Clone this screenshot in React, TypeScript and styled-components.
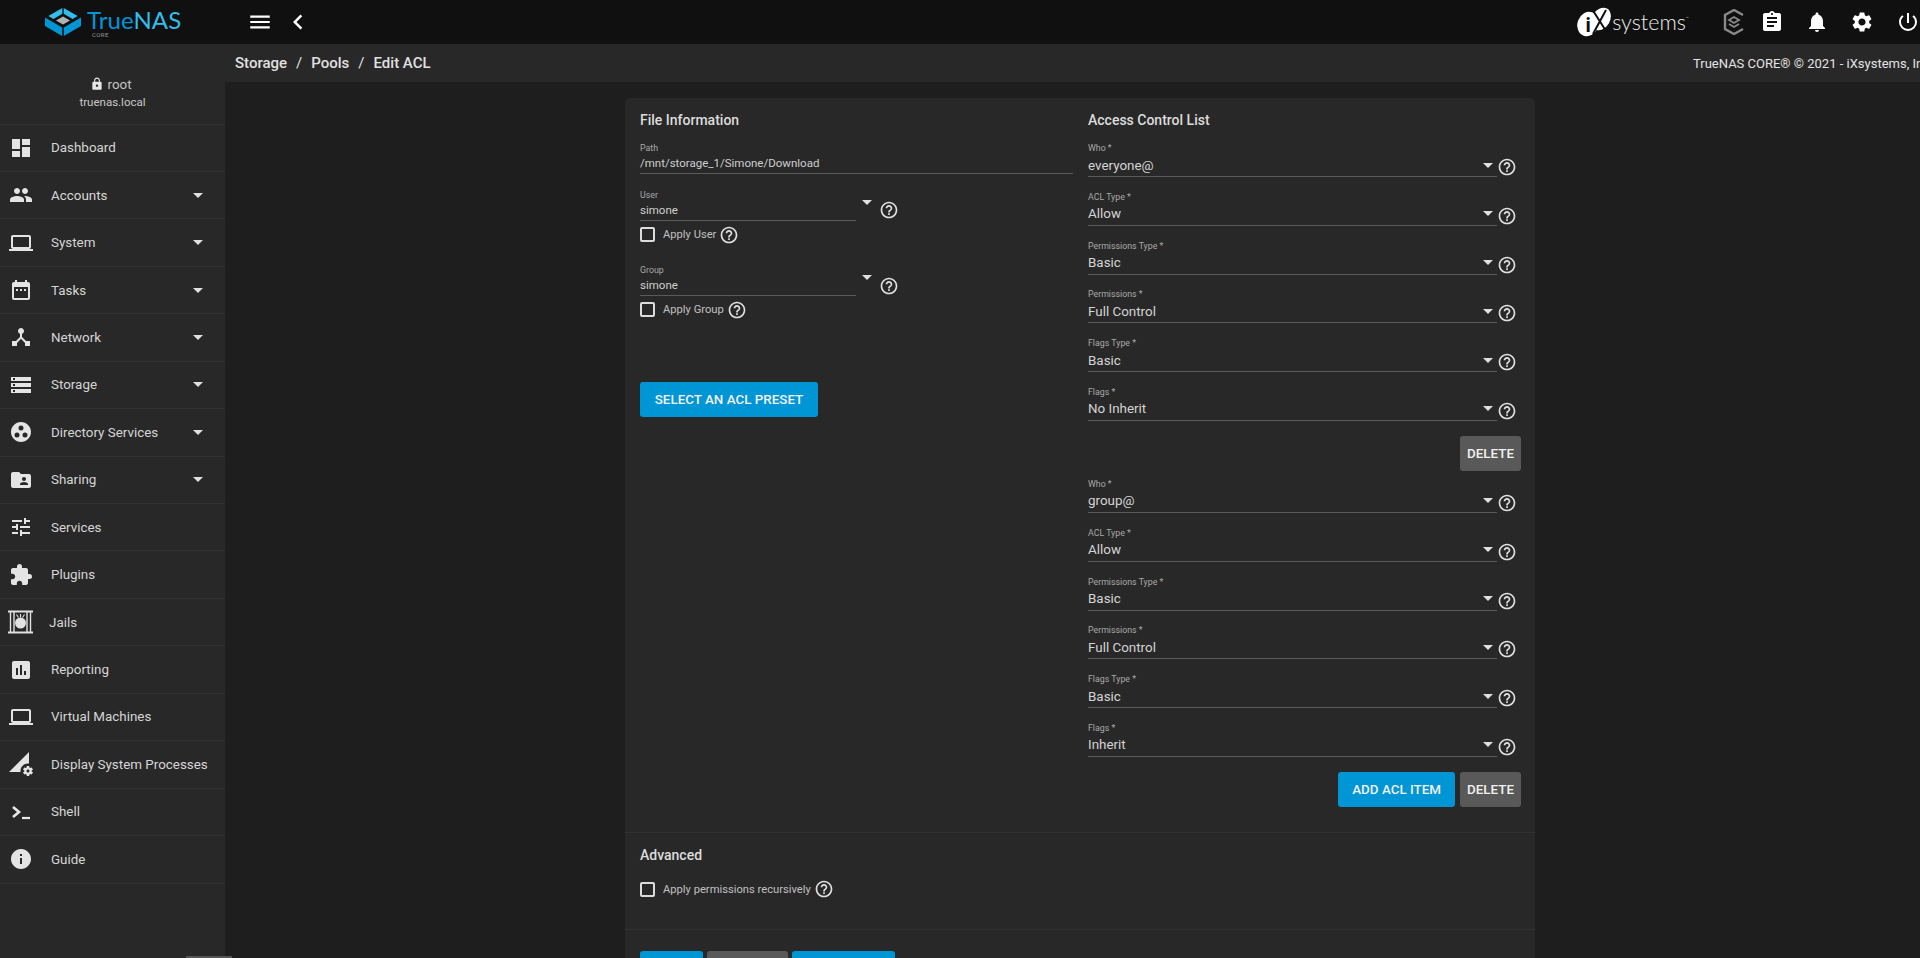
import React from 'react';
import styled, { createGlobalStyle } from 'styled-components';
import {
  MdAssessment,
  MdAssignment,
  MdChevronLeft,
  MdDashboard,
  MdDateRange,
  MdDeviceHub,
  MdExtension,
  MdFolderShared,
  MdGroup,
  MdGroupWork,
  MdHelpOutline,
  MdInfo,
  MdLaptop,
  MdLock,
  MdMenu,
  MdNotifications,
  MdPermDataSetting,
  MdPowerSettingsNew,
  MdSettings,
  MdStorage,
  MdTune,
} from 'react-icons/md';

const GlobalStyle = createGlobalStyle`
  html, body {
    margin: 0;
    height: 100%;
    overflow: hidden;
    background: #1e1e1e;
    font-family: Roboto, "Liberation Sans", sans-serif;
  }
  * {
    box-sizing: border-box;
  }
`;

const JailIcon = () => (
  <svg width="27" height="24" viewBox="0 0 27 24" fill="none" stroke="#e2e2e2">
    <path d="M1 1.5h25M1 22.5h25" strokeWidth="2" />
    <path d="M3.5 2v20M7 2v20M20 2v20M23.5 2v20" strokeWidth="1.4" />
    <circle cx="13.5" cy="13" r="5.5" fill="#e2e2e2" stroke="none" />
    <path d="M13.5 7.5V4M15.5 7.5l2-3M11.5 7.5l-2-3" strokeWidth="1.1" />
  </svg>
);

const ShellIcon = () => (
  <svg width="24" height="24" viewBox="0 0 24 24" fill="none" stroke="#e8e8e8">
    <path d="M4 7l6 5-6 5" strokeWidth="2.6" />
    <path d="M13 18h8" strokeWidth="2.2" />
  </svg>
);

const TrueNasMark = () => (
  <svg width="36" height="28" viewBox="0 0 36 28">
    <polygon points="17.3,0 17.3,5.8 8.4,11 3.4,8" fill="#31beec" />
    <polygon points="18.7,0 18.7,5.8 27.6,11 32.6,8" fill="#31beec" />
    <polygon points="18,8.6 25,12.6 18,16.6 11,12.6" fill="#aeb3b5" />
    <polygon points="0,9.6 17.2,19.6 17.2,28 0,18" fill="#0095d5" />
    <polygon points="36,9.6 18.8,19.6 18.8,28 36,18" fill="#0095d5" />
  </svg>
);

const IxMark = () => (
  <svg width="34" height="30" viewBox="0 0 34 30">
    <ellipse cx="11" cy="17" rx="10.5" ry="12.5" transform="rotate(20 11 17)" fill="#fff" />
    <ellipse cx="24" cy="12" rx="9" ry="12" transform="rotate(30 24 12)" fill="#fff" />
    <text x="8.5" y="25" fontSize="20" fontWeight="700" fontFamily="Roboto" fill="#101010">i</text>
    <path d="M15 2l14 22M29 3L16 27" stroke="#101010" strokeWidth="2" />
  </svg>
);

const TrueCommandIcon = () => (
  <svg width="24" height="26" viewBox="0 0 24 26" fill="none" stroke="#8a8a8a" strokeWidth="2.4">
    <path d="M21 6l-9-5-9 5v14l9 5 9-5" />
    <path d="M7 11l5-3 5 3-5 3zM7 15l5 3 5-3" strokeWidth="1.8" />
  </svg>
);

const navItems = [
  { label: 'Dashboard', icon: <MdDashboard /> },
  { label: 'Accounts', icon: <MdGroup />, more: true },
  { label: 'System', icon: <MdLaptop />, more: true },
  { label: 'Tasks', icon: <MdDateRange />, more: true },
  { label: 'Network', icon: <MdDeviceHub />, more: true },
  { label: 'Storage', icon: <MdStorage />, more: true },
  { label: 'Directory Services', icon: <MdGroupWork />, more: true },
  { label: 'Sharing', icon: <MdFolderShared />, more: true },
  { label: 'Services', icon: <MdTune /> },
  { label: 'Plugins', icon: <MdExtension /> },
  { label: 'Jails', icon: <JailIcon />, tight: true },
  { label: 'Reporting', icon: <MdAssessment /> },
  { label: 'Virtual Machines', icon: <MdLaptop /> },
  { label: 'Display System Processes', icon: <MdPermDataSetting /> },
  { label: 'Shell', icon: <ShellIcon /> },
  { label: 'Guide', icon: <MdInfo /> },
];

const aclGroups = [
  [
    ['Who *', 'everyone@'],
    ['ACL Type *', 'Allow'],
    ['Permissions Type *', 'Basic'],
    ['Permissions *', 'Full Control'],
    ['Flags Type *', 'Basic'],
    ['Flags *', 'No Inherit'],
  ],
  [
    ['Who *', 'group@'],
    ['ACL Type *', 'Allow'],
    ['Permissions Type *', 'Basic'],
    ['Permissions *', 'Full Control'],
    ['Flags Type *', 'Basic'],
    ['Flags *', 'Inherit'],
  ],
];

const App: React.FC = () => {
  return (
    <Page>
      <GlobalStyle />
      <TopBar>
        <Brand>
          <TrueNasMark />
          <BrandName>
            <BrandText>
              True<b>NAS</b>
            </BrandText>
            <BrandSub>CORE</BrandSub>
          </BrandName>
        </Brand>
        <TopIcon $size={26}>
          <MdMenu />
        </TopIcon>
        <BackIcon>
          <MdChevronLeft />
        </BackIcon>
        <TopRight>
          <IxLogo>
            <IxMark />
            <IxText>systems</IxText>
            <IxTm>™</IxTm>
          </IxLogo>
          <TrueCommand>
            <TrueCommandIcon />
          </TrueCommand>
          <TopIcon $size={24} $gap={14}>
            <MdAssignment />
          </TopIcon>
          <TopIcon $size={24} $gap={21}>
            <MdNotifications />
          </TopIcon>
          <TopIcon $size={24} $gap={21}>
            <MdSettings />
          </TopIcon>
          <TopIcon $size={24} $gap={22}>
            <MdPowerSettingsNew />
          </TopIcon>
        </TopRight>
      </TopBar>
      <Body>
        <Sidebar>
          <UserBlock>
            <UserName>
              <MdLock />
              root
            </UserName>
            <HostName>truenas.local</HostName>
          </UserBlock>
          {navItems.map(item => (
            <NavItem key={item.label}>
              <NavIcon>{item.icon}</NavIcon>
              <NavLabel $tight={item.tight}>{item.label}</NavLabel>
              {item.more && <NavCaret />}
            </NavItem>
          ))}
        </Sidebar>
        <Main>
          <Crumbs>
            <CrumbTrail>
              <span>Storage</span>
              <CrumbSlash>/</CrumbSlash>
              <span>Pools</span>
              <CrumbSlash>/</CrumbSlash>
              <span>Edit ACL</span>
            </CrumbTrail>
            <Copyright>TrueNAS CORE® © 2021 - iXsystems, Inc.</Copyright>
          </Crumbs>
          <Content>
            <Card>
              <Columns>
                <div>
                  <SectionTitle>File Information</SectionTitle>
                  <PathField>
                    <FieldLabel>Path</FieldLabel>
                    <SmallValue>/mnt/storage_1/Simone/Download</SmallValue>
                  </PathField>
                  <SelectRow>
                    <ShortField>
                      <FieldLabel>User</FieldLabel>
                      <SmallValue>simone</SmallValue>
                    </ShortField>
                    <TopCaret />
                    <HelpIcon $top={12} $left={7}>
                      <MdHelpOutline />
                    </HelpIcon>
                  </SelectRow>
                  <CheckRow>
                    <CheckBox />
                    <CheckLabel>Apply User</CheckLabel>
                    <HelpIcon $left={3}>
                      <MdHelpOutline />
                    </HelpIcon>
                  </CheckRow>
                  <SelectRow $top={21}>
                    <ShortField>
                      <FieldLabel>Group</FieldLabel>
                      <SmallValue>simone</SmallValue>
                    </ShortField>
                    <TopCaret />
                    <HelpIcon $top={13} $left={7}>
                      <MdHelpOutline />
                    </HelpIcon>
                  </SelectRow>
                  <CheckRow>
                    <CheckBox />
                    <CheckLabel>Apply Group</CheckLabel>
                    <HelpIcon $left={3}>
                      <MdHelpOutline />
                    </HelpIcon>
                  </CheckRow>
                  <PresetButton>SELECT AN ACL PRESET</PresetButton>
                </div>
                <div>
                  <SectionTitle>Access Control List</SectionTitle>
                  {aclGroups.map((fields, index) => (
                    <AclGroup key={index}>
                      {fields.map(([label, value]) => (
                        <AclRow key={label}>
                          <AclField>
                            <FieldLabel>{label}</FieldLabel>
                            <AclValue>
                              {value}
                              <Caret />
                            </AclValue>
                          </AclField>
                          <HelpIcon $top={16}>
                            <MdHelpOutline />
                          </HelpIcon>
                        </AclRow>
                      ))}
                      <ActionRow>
                        {index === aclGroups.length - 1 && <BlueButton>ADD ACL ITEM</BlueButton>}
                        <GreyButton>DELETE</GreyButton>
                      </ActionRow>
                    </AclGroup>
                  ))}
                </div>
              </Columns>
              <Advanced>
                <SectionTitle>Advanced</SectionTitle>
                <CheckRow $top={19}>
                  <CheckBox />
                  <CheckLabel>Apply permissions recursively</CheckLabel>
                  <HelpIcon $left={3}>
                    <MdHelpOutline />
                  </HelpIcon>
                </CheckRow>
              </Advanced>
              <Footer>
                <BlueButton $width={63}>SAVE</BlueButton>
                <GreyButton $width={81}>CANCEL</GreyButton>
                <BlueButton $width={103}>USE PRESET</BlueButton>
              </Footer>
            </Card>
          </Content>
        </Main>
      </Body>
      <ScrollThumb />
    </Page>
  );
};

export default App;

const Page = styled.div`
  position: relative;
  display: flex;
  flex-direction: column;
  height: 100vh;
  overflow: hidden;
`;

const TopBar = styled.header`
  display: flex;
  align-items: center;
  flex: 0 0 44px;
  background: #101010;
  color: #fff;
`;

const Brand = styled.div`
  display: flex;
  align-items: center;
  gap: 6px;
  width: 247px;
  padding-left: 45px;
`;

const BrandName = styled.div`
  display: flex;
  flex-direction: column;
`;

const BrandText = styled.div`
  font-family: Lato, sans-serif;
  font-size: 24px;
  line-height: 25px;
  letter-spacing: 0.1px;
  color: #0095d5;
  b {
    font-weight: 400;
    color: #31beec;
  }
`;

const BrandSub = styled.div`
  margin: -1px 0 0 5px;
  font-size: 6px;
  line-height: 7px;
  letter-spacing: 0.4px;
  color: #999;
`;

const TopIcon = styled.div<{ $size: number; $gap?: number }>`
  display: flex;
  margin-left: ${p => p.$gap ?? 0}px;
  font-size: ${p => p.$size}px;
  color: #fff;
`;

const BackIcon = styled.div`
  display: flex;
  margin-left: 10px;
  font-size: 30px;
  color: #fff;
`;

const TopRight = styled.div`
  display: flex;
  align-items: center;
  margin-left: auto;
`;

const IxLogo = styled.div`
  display: flex;
  align-items: center;
  margin-right: 33px;
`;

const IxText = styled.span`
  margin-left: 1px;
  font-family: Lato, sans-serif;
  font-weight: 300;
  font-size: 21.5px;
  line-height: 30px;
  color: #eee;
`;

const IxTm = styled.span`
  align-self: flex-start;
  margin: 8px 0 0 0;
  font-size: 5px;
  color: #aaa;
`;

const TrueCommand = styled.div`
  display: flex;
`;

const Body = styled.div`
  display: flex;
  flex: 1;
  min-height: 0;
`;

const Sidebar = styled.nav`
  flex: 0 0 225px;
  background: #282828;
  color: #d6d6d6;
`;

const UserBlock = styled.div`
  display: flex;
  flex-direction: column;
  align-items: center;
  height: 80.5px;
  padding-top: 32px;
  border-bottom: 1px solid #323232;
`;

const UserName = styled.div`
  display: flex;
  align-items: center;
  gap: 3px;
  margin-left: -3px;
  font-size: 13.4px;
  line-height: 18px;
  color: #c4c4c4;
  svg {
    margin-top: -3px;
    font-size: 14px;
    color: #e6e6e6;
  }
`;

const HostName = styled.div`
  font-size: 11.5px;
  line-height: 16px;
  color: #c8c8c8;
`;

const NavItem = styled.div`
  display: flex;
  align-items: center;
  height: 47.45px;
  border-bottom: 1px solid #323232;
`;

const NavIcon = styled.div`
  display: flex;
  justify-content: center;
  flex: 0 0 41px;
  font-size: 24px;
  color: #e4e4e4;
`;

const NavLabel = styled.span<{ $tight?: boolean }>`
  margin-left: ${p => (p.$tight ? 8 : 10)}px;
  font-size: 13.4px;
  color: #d6d6d6;
`;

const NavCaret = styled.i`
  margin: 0 22px 0 auto;
  border-left: 5px solid transparent;
  border-right: 5px solid transparent;
  border-top: 5px solid #e0e0e0;
`;

const Main = styled.main`
  display: flex;
  flex-direction: column;
  flex: 1;
  min-width: 0;
  background: #1e1e1e;
`;

const Crumbs = styled.div`
  display: flex;
  align-items: center;
  justify-content: space-between;
  flex: 0 0 38px;
  padding-left: 10px;
  background: #282828;
`;

const CrumbTrail = styled.div`
  display: flex;
  gap: 8px;
  font-size: 15px;
  font-weight: 500;
  color: #e0e0e0;
`;

const CrumbSlash = styled.span`
  font-weight: 400;
  padding: 0 1px;
`;

const Copyright = styled.div`
  flex: 0 0 227px;
  overflow: hidden;
  white-space: nowrap;
  font-size: 13px;
  color: #e4e4e4;
`;

const Content = styled.div`
  flex: 1;
  min-height: 0;
  padding: 16px 0 0 400px;
  overflow: hidden;
`;

const Card = styled.section`
  width: 910px;
  border-radius: 5px 5px 0 0;
  background: #282828;
`;

const Columns = styled.div`
  display: grid;
  grid-template-columns: 433px 433px;
  column-gap: 15px;
  padding: 14px 14px 25px 15px;
  border-bottom: 1px solid #303030;
`;

const SectionTitle = styled.h3`
  margin: 0 0 13px;
  font-size: 14px;
  line-height: 16px;
  font-weight: 500;
  color: #dcdcdc;
`;

const FieldLabel = styled.div`
  height: 13px;
  font-size: 8.8px;
  line-height: 14px;
  color: #a8a8a8;
  white-space: nowrap;
`;

const PathField = styled.div`
  width: 433px;
  border-bottom: 1px solid #5a5a5a;
`;

const ShortField = styled.div`
  width: 216px;
  border-bottom: 1px solid #5a5a5a;
`;

const SmallValue = styled.div`
  height: 19px;
  font-size: 11.5px;
  line-height: 19px;
  color: #cfcfcf;
`;

const SelectRow = styled.div<{ $top?: number }>`
  display: flex;
  align-items: flex-start;
  margin-top: ${p => p.$top ?? 14}px;
`;

const Caret = styled.i`
  border-left: 5px solid transparent;
  border-right: 5px solid transparent;
  border-top: 5px solid #e0e0e0;
`;

const TopCaret = styled(Caret)`
  margin: 12px 0 0 6px;
`;

const HelpIcon = styled.span<{ $top?: number; $left?: number }>`
  display: flex;
  margin: ${p => p.$top ?? 0}px 0 0 ${p => p.$left ?? 0}px;
  font-size: 20px;
  color: #e0e0e0;
`;

const CheckRow = styled.div<{ $top?: number }>`
  display: flex;
  align-items: center;
  height: 15px;
  margin-top: ${p => p.$top ?? 6}px;
`;

const CheckBox = styled.span`
  width: 15px;
  height: 15px;
  border: 2px solid #dcdcdc;
  border-radius: 2px;
`;

const CheckLabel = styled.span`
  margin-left: 8px;
  font-size: 11.2px;
  color: #c0c0c0;
`;

const ButtonBase = styled.button<{ $width?: number }>`
  height: 35px;
  width: ${p => (p.$width ? `${p.$width}px` : 'auto')};
  padding: 0 14px;
  border: 0;
  border-radius: 3px;
  font-family: inherit;
  font-size: 13.4px;
  font-weight: 500;
  color: #f2f2f2;
  white-space: nowrap;
`;

const BlueButton = styled(ButtonBase)`
  background: #0095d5;
`;

const GreyButton = styled(ButtonBase)`
  padding: 0 7px;
  background: #595959;
`;

const PresetButton = styled(BlueButton)`
  display: block;
  width: 178px;
  margin-top: 65px;
  padding: 0;
`;

const AclGroup = styled.div`
  margin-bottom: 6px;
  &:last-child {
    margin-bottom: 0;
  }
`;

const AclRow = styled.div`
  display: flex;
  align-items: flex-start;
  margin-bottom: 12.8px;
`;

const AclField = styled.div`
  width: 409px;
  border-bottom: 1px solid #5a5a5a;
`;

const AclValue = styled.div`
  display: flex;
  align-items: center;
  justify-content: space-between;
  height: 22px;
  padding-right: 4px;
  font-size: 13.4px;
  color: #d4d4d4;
`;

const ActionRow = styled.div`
  display: flex;
  justify-content: flex-end;
  gap: 5px;
  margin-top: 15px;
`;

const Advanced = styled.div`
  height: 97px;
  padding: 14px 15px 0;
  border-bottom: 1px solid #303030;
  h3 {
    margin-bottom: 0;
  }
`;

const Footer = styled.div`
  display: flex;
  gap: 4px;
  padding: 21px 15px 0;
`;

const ScrollThumb = styled.div`
  position: absolute;
  left: 186px;
  bottom: 0;
  width: 46px;
  height: 2px;
  background: #555;
`;
